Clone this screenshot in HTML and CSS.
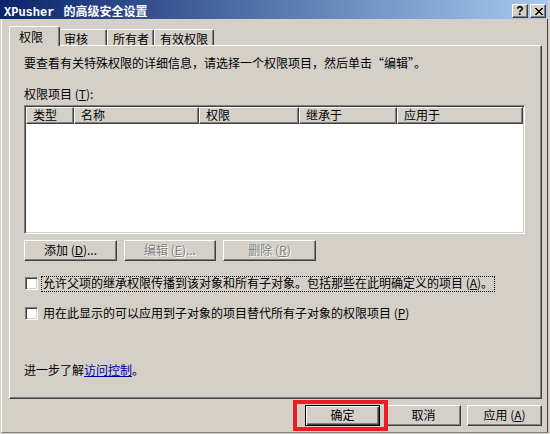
FILE: index.html
```html
<!DOCTYPE html>
<html lang="zh-CN">
<head>
<meta charset="utf-8">
<title>XPusher 的高级安全设置</title>
<link rel="stylesheet" href="styles.css">
</head>
<body>
<div class="window">
  <div class="titlebar">
    <div class="title"><span class="title-latin">XPusher</span><span>的高级安全设置</span></div>
    <div class="caption-buttons">
      <div class="cap-btn cap-help">?</div>
      <div class="cap-btn cap-close">
        <svg width="8" height="7" viewBox="0 0 8 7" shape-rendering="crispEdges">
          <g fill="#000">
            <rect x="0" y="0" width="2" height="1"/><rect x="6" y="0" width="2" height="1"/>
            <rect x="1" y="1" width="2" height="1"/><rect x="5" y="1" width="2" height="1"/>
            <rect x="2" y="2" width="4" height="1"/>
            <rect x="3" y="3" width="2" height="1"/>
            <rect x="2" y="4" width="4" height="1"/>
            <rect x="1" y="5" width="2" height="1"/><rect x="5" y="5" width="2" height="1"/>
            <rect x="0" y="6" width="2" height="1"/><rect x="6" y="6" width="2" height="1"/>
          </g>
        </svg>
      </div>
    </div>
  </div>

  <div class="client">
    <div class="tabs">
      <div class="tab tab-active">权限</div>
      <div class="tab tab-second">审核</div>
      <div class="tab tab-third">所有者</div>
      <div class="tab tab-fourth">有效权限</div>
    </div>

    <div class="panel">
      <div class="intro">要查看有关特殊权限的详细信息，请选择一个权限项目，然后单击“编辑”。</div>
      <div class="list-label">权限项目 (<u>T</u>):</div>
      <div class="listview">
        <div class="lv-header">
          <div class="lv-col col-type">类型</div>
          <div class="lv-col col-name">名称</div>
          <div class="lv-col col-perm">权限</div>
          <div class="lv-col col-inherit">继承于</div>
          <div class="lv-col col-apply">应用于</div>
        </div>
      </div>
      <div class="action-row">
        <div class="btn btn-add">添加 (<u>D</u>)...</div>
        <div class="btn btn-edit disabled">编辑 (<u>E</u>)...</div>
        <div class="btn btn-delete disabled">删除 (<u>R</u>)</div>
      </div>
      <div class="check-row check-first">
        <span class="checkbox"></span>
        <span class="check-text focused">允许父项的继承权限传播到该对象和所有子对象。包括那些在此明确定义的项目 (<u>A</u>)。</span>
      </div>
      <div class="check-row check-second">
        <span class="checkbox"></span>
        <span class="check-text">用在此显示的可以应用到子对象的项目替代所有子对象的权限项目 (<u>P</u>)</span>
      </div>
      <div class="learn-more">进一步了解<a class="link" href="#">访问控制</a>。</div>
    </div>

    <div class="footer">
      <div class="btn btn-footer btn-default">确定</div>
      <div class="btn btn-footer">取消</div>
      <div class="btn btn-footer">应用 (<u>A</u>)</div>
    </div>
  </div>

  <div class="highlight-box"></div>
</div>
</body>
</html>
```

FILE: styles.css
```css
* { box-sizing: border-box; }

html, body {
  margin: 0;
  padding: 0;
}

body {
  width: 550px;
  height: 434px;
  overflow: hidden;
  background: #d4d0c8;
  font-family: "Noto Sans CJK SC", "Noto Sans CJK JP", sans-serif;
  font-size: 12px;
  line-height: 12px;
  color: #000;
}

.window {
  position: relative;
  width: 550px;
  height: 434px;
  background: #d4d0c8;
  display: flex;
  flex-direction: column;
}

/* ---------- title bar ---------- */
.titlebar {
  flex: none;
  width: 548px;
  height: 19px;
  display: flex;
  justify-content: space-between;
  align-items: flex-start;
  padding: 0 2px 0 4px;
  background: linear-gradient(to right, #0a246a, #a6caf0);
  color: #fff;
}

.title {
  margin-top: 5px;
  font-weight: bold;
  white-space: nowrap;
  display: flex;
  align-items: baseline;
}

.title-latin {
  font-family: "Liberation Mono", monospace;
  font-size: 12px;
  margin-right: 9px;
}

.caption-buttons {
  display: flex;
  gap: 2px;
  margin-top: 4px;
}

.cap-btn {
  width: 16px;
  height: 14px;
  background: #d4d0c8;
  border: 1px solid;
  border-color: #fff #404040 #404040 #fff;
  box-shadow: inset -1px -1px #808080;
  display: flex;
  align-items: center;
  justify-content: center;
  color: #000;
}

.cap-help {
  font-family: "Liberation Sans", sans-serif;
  font-weight: bold;
  font-size: 12px;
  line-height: 12px;
}

.cap-close svg { display: block; margin-left: 1px; }

/* ---------- client ---------- */
.client {
  flex: none;
  margin-left: 1px;
  width: 547px;
  height: 414px;
  border-left: 1px solid #fff;
  border-right: 1px solid #404040;
  border-bottom: 1px solid #808080;
  display: flex;
  flex-direction: column;
}

.tabs {
  flex: none;
  display: flex;
  align-items: flex-end;
  height: 26px;
  padding-left: 7px;
  position: relative;
  z-index: 1;
}

.tab {
  height: 16px;
  background: #d4d0c8;
  border-top: 1px solid #fff;
  border-left: 1px solid #fff;
  border-right: 1px solid #404040;
  box-shadow: inset -1px 0 #808080;
  border-radius: 2px 2px 0 0;
  padding: 3px 0 0 5px;
  white-space: nowrap;
}

.tab-active {
  width: 51px;
  height: 20px;
  margin-bottom: -1px;
  padding: 4px 0 0 9px;
}

.tab-second { width: 47px; padding-left: 3px; border-left-color: #d4d0c8; }
.tab-third { width: 47px; }
.tab-fourth { width: 60px; }

.panel {
  flex: none;
  margin-left: 7px;
  width: 533px;
  height: 354px;
  border: 1px solid;
  border-color: #fff #404040 #404040 #fff;
  box-shadow: inset -1px -1px #808080;
  padding: 11px 0 0 14px;
  display: flex;
  flex-direction: column;
  align-items: flex-start;
}

.intro { height: 12px; white-space: nowrap; }

.list-label { margin-top: 19px; height: 12px; }

.listview {
  margin-top: 5px;
  width: 501px;
  height: 129px;
  background: #fff;
  border: 1px solid;
  border-color: #808080 #fff #fff #808080;
  box-shadow: inset 1px 1px #404040, inset -1px -1px #d4d0c8;
  padding: 1px;
}

.lv-header {
  display: flex;
  height: 17px;
}

.lv-col {
  height: 17px;
  background: #d4d0c8;
  border: 1px solid;
  border-color: #fff #404040 #404040 #fff;
  box-shadow: inset -1px -1px #808080;
  padding: 1px 0 0 6px;
  white-space: nowrap;
}

.col-type { width: 48px; }
.col-name { width: 125px; }
.col-perm { width: 100px; }
.col-inherit { width: 98px; }
.col-apply { width: 126px; }

.action-row {
  margin-top: 6px;
  display: flex;
  gap: 7px;
}

.btn {
  height: 21px;
  background: #d4d0c8;
  border: 1px solid;
  border-color: #fff #404040 #404040 #fff;
  box-shadow: inset -1px -1px #808080;
  display: flex;
  align-items: center;
  justify-content: center;
  white-space: nowrap;
  padding-bottom: 1px;
}

.btn-add { width: 93px; }
.btn-edit { width: 92px; }
.btn-delete { width: 93px; }

.btn.disabled {
  color: #808080;
  text-shadow: 1px 1px 0 #fff;
}

.check-row {
  display: flex;
  align-items: flex-start;
  height: 16px;
}

.check-first { margin-top: 15px; }
.check-second { margin-top: 14px; }

.checkbox {
  flex: none;
  width: 13px;
  height: 13px;
  margin: 1px 0 0 1px;
  background: #fff;
  border: 1px solid;
  border-color: #808080 #fff #fff #808080;
  box-shadow: inset 1px 1px #404040, inset -1px -1px #d4d0c8;
}

.check-text {
  margin-left: 3px;
  height: 16px;
  border: 1px solid transparent;
  padding: 0 1px 2px 1px;
  white-space: nowrap;
}

.check-text.focused { border: 1px dotted #000; }

.learn-more { margin-top: 42px; height: 12px; white-space: nowrap; }

.link {
  color: #0000a8;
  text-decoration: underline;
}

/* ---------- footer ---------- */
.footer {
  margin-top: 6px;
  display: flex;
  justify-content: flex-end;
  gap: 6px;
  padding-right: 5px;
}

.btn-footer { width: 75px; }

.btn-default {
  border-color: #000;
  box-shadow: inset 1px 1px #fff, inset -1px -1px #404040, inset -2px -2px #808080;
}

/* annotation overlay */
.highlight-box {
  position: absolute;
  left: 293px;
  top: 400px;
  width: 95px;
  height: 31px;
  border: 4px solid #ea1c24;
}
```
